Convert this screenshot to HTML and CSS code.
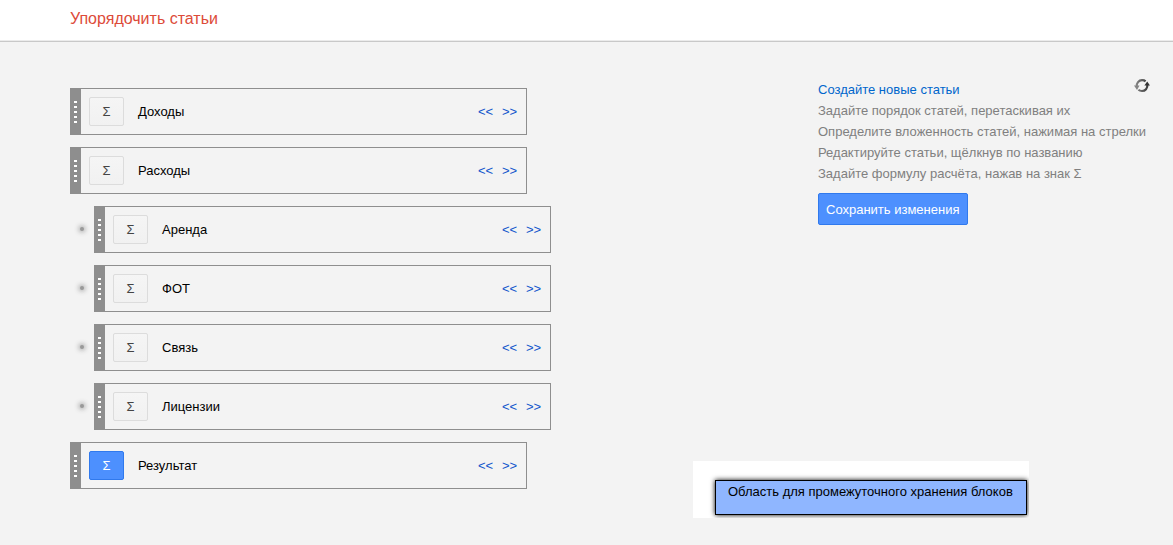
FILE: index.html
```html
<!DOCTYPE html>
<html lang="ru">
<head>
<meta charset="utf-8">
<title>Упорядочить статьи</title>
<link rel="stylesheet" href="styles.css">
</head>
<body>
<header class="header"><h1 class="title">Упорядочить статьи</h1></header>
<main class="main">
  <ul class="list">
    <li class="item"><div class="card"><span class="handle"><i class="grip"></i></span><button class="sigma" type="button">Σ</button><span class="name">Доходы</span><a class="arrow" href="#">&lt;&lt;</a><a class="arrow" href="#">&gt;&gt;</a></div></li>
    <li class="item"><div class="card"><span class="handle"><i class="grip"></i></span><button class="sigma" type="button">Σ</button><span class="name">Расходы</span><a class="arrow" href="#">&lt;&lt;</a><a class="arrow" href="#">&gt;&gt;</a></div></li>
    <li class="item nested"><i class="dot"></i><div class="card"><span class="handle"><i class="grip"></i></span><button class="sigma" type="button">Σ</button><span class="name">Аренда</span><a class="arrow" href="#">&lt;&lt;</a><a class="arrow" href="#">&gt;&gt;</a></div></li>
    <li class="item nested"><i class="dot"></i><div class="card"><span class="handle"><i class="grip"></i></span><button class="sigma" type="button">Σ</button><span class="name">ФОТ</span><a class="arrow" href="#">&lt;&lt;</a><a class="arrow" href="#">&gt;&gt;</a></div></li>
    <li class="item nested"><i class="dot"></i><div class="card"><span class="handle"><i class="grip"></i></span><button class="sigma" type="button">Σ</button><span class="name">Связь</span><a class="arrow" href="#">&lt;&lt;</a><a class="arrow" href="#">&gt;&gt;</a></div></li>
    <li class="item nested"><i class="dot"></i><div class="card"><span class="handle"><i class="grip"></i></span><button class="sigma" type="button">Σ</button><span class="name">Лицензии</span><a class="arrow" href="#">&lt;&lt;</a><a class="arrow" href="#">&gt;&gt;</a></div></li>
    <li class="item"><div class="card"><span class="handle"><i class="grip"></i></span><button class="sigma active" type="button">Σ</button><span class="name">Результат</span><a class="arrow" href="#">&lt;&lt;</a><a class="arrow" href="#">&gt;&gt;</a></div></li>
  </ul>
  <aside class="side">
    <section class="help">
      <div class="help-top">
        <a class="create" href="#">Создайте новые статьи</a>
        <button class="refresh" type="button" aria-label="Обновить">
          <svg width="16" height="14" viewBox="0 0 16 14" fill="none">
            <defs><linearGradient id="g" x1="0" y1="0" x2="16" y2="0" gradientUnits="userSpaceOnUse"><stop offset="0" stop-color="#909090"/><stop offset="1" stop-color="#2e2e2e"/></linearGradient></defs>
            <path d="M2.600 8C2.300 4 4.800 1.200 8 1.200C9.500 1.200 10.700 1.600 11.600 2.400" stroke="url(#g)" stroke-width="2.200"/>
            <path d="M0 6.500H5.500L3 11Z" fill="#858585"/>
            <path d="M13.400 5C13.700 9.500 11.200 12 8 12C6.500 12 5.300 11.600 4.400 10.800" stroke="url(#g)" stroke-width="2.200"/>
            <path d="M10.400 6.500H16L13.200 2.500Z" fill="#333"/>
          </svg>
        </button>
      </div>
      <p class="hint">Задайте порядок статей, перетаскивая их</p>
      <p class="hint">Определите вложенность статей, нажимая на стрелки</p>
      <p class="hint">Редактируйте статьи, щёлкнув по названию</p>
      <p class="hint">Задайте формулу расчёта, нажав на знак Σ</p>
      <button class="save" type="button">Сохранить изменения</button>
    </section>
    <section class="tray"><div class="tray-box">Область для промежуточного хранения блоков</div></section>
  </aside>
</main>
</body>
</html>
```
FILE: styles.css
```css
* { box-sizing: border-box; }
body {
  margin: 0;
  background: #f3f3f3;
  color: #000;
  font: 13px/21px "Liberation Sans", Arial, sans-serif;
}
a { text-decoration: none; }
button { font: inherit; cursor: pointer; }
.header {
  padding: 8px 70px 12px;
  background: #fff;
  border-bottom: 1px solid #c8c8c8;
  box-shadow: inset 0 -1px #ebebeb;
}
.title {
  margin: 0;
  color: #dd4b39;
  font-size: 16px;
  font-weight: normal;
  line-height: 21px;
}
.main {
  display: flex;
  justify-content: space-between;
  padding: 32px 23px 27px 70px;
}
.list {
  display: flex;
  flex-direction: column;
  gap: 12px;
  margin: 0;
  padding: 14px 0 29px;
  list-style: none;
}
.item { display: flex; align-items: center; }
.card {
  display: flex;
  align-items: center;
  width: 457px;
  height: 47px;
  padding-right: 8px;
  border: 1px solid #8e8e8e;
  border-left: 0;
}
.handle {
  display: flex;
  align-items: center;
  justify-content: center;
  align-self: stretch;
  width: 11px;
  margin: -1px 8px -1px 0;
  background: #8e8e8e;
}
.grip {
  width: 3px;
  height: 22px;
  margin-top: 1px;
  background: repeating-linear-gradient(#fff 0 2px, transparent 2px 5px);
}
.sigma {
  width: 35px;
  height: 29px;
  padding: 0;
  border: 1px solid #dcdcdc;
  border-radius: 2px;
  background: linear-gradient(#f5f5f5, #f1f1f1);
  color: #444;
}
.sigma.active {
  border-color: #3079ed;
  background: #4d90fe;
  color: #fff;
}
.name { flex: 1; margin-left: 14px; }
.arrow { width: 16px; margin-left: 8px; color: #15c; }
.dot {
  width: 4px;
  height: 4px;
  margin: 0 10px 1px;
  border-radius: 50%;
  background: #999;
  box-shadow: 0 0 5px 1px #999;
}
.side {
  display: flex;
  flex-direction: column;
  justify-content: space-between;
  align-items: flex-end;
}
.help { min-width: 332px; padding-top: 5px; color: #808080; }
.help-top { display: flex; justify-content: space-between; }
.create { color: #0066cc; }
.refresh {
  width: 16px;
  height: 14px;
  padding: 0;
  border: 0;
  background: none;
}
.refresh svg { display: block; }
.hint { margin: 0; }
.save {
  height: 32px;
  margin-top: 9px;
  padding: 0 7px;
  border: 1px solid #3079ed;
  border-radius: 2px;
  background: #4d90fe;
  color: #fff;
}
.tray {
  margin-right: 121px;
  padding: 19px 2px 3px 22px;
  overflow: hidden;
  background: #fff;
}
.tray-box {
  min-width: 312px;
  height: 35px;
  padding: 0 12px;
  border: 1px solid #000;
  background: #8fb6ff;
  box-shadow: 0 0 5px #000;
}
```
